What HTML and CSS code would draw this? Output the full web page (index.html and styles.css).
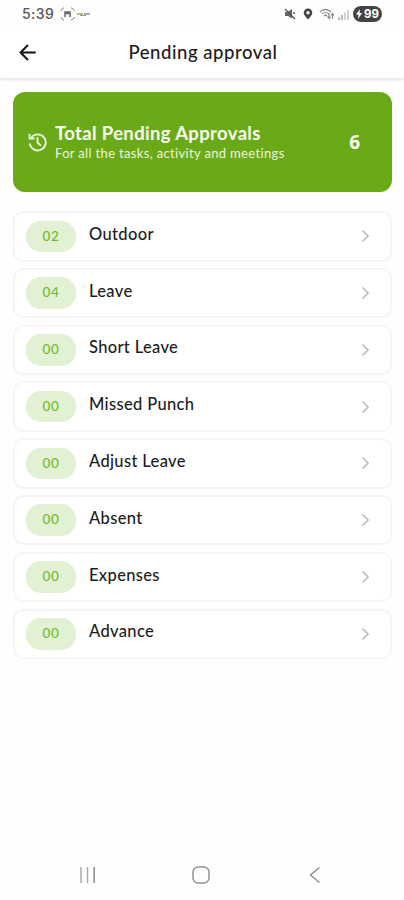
FILE: index.html
```
<!DOCTYPE html>
<html lang="en">
<head>
<meta charset="utf-8">
<title>Pending approval</title>
<link rel="stylesheet" href="styles.css">
</head>
<body>
<div class="screen">
  <div class="status">
    <span class="clock">5:39</span>
    <svg class="scan" width="15" height="14" viewBox="0 0 15 14" fill="none" stroke="#888"><path d="M1 4V3l2-2h1M11 1h1l2 2v1M14 10v1l-2 2h-1M4 13H3l-2-2v-1"/><path d="M5 10V5h5v5M5.500 6.500h4" stroke="#666" stroke-width="1.500"/></svg>
    <svg class="app" width="14" height="5" viewBox="0 0 14 5" fill="none"><path d="M0 2h6" stroke="#b5bc76" stroke-width="2"/><path d="M3 3.500h6" stroke="#999"/><path d="M7 2h6" stroke="#aaa" stroke-width="2"/></svg>
    <span class="fill"></span>
    <svg class="mute" width="12" height="12" viewBox="0 0 12 12"><path d="M1 4h2.500L8 1v9.500L4 8H1z" fill="#666"/><path d="M1 1l10 10M9 5h2" stroke="#555" stroke-width="1.300"/></svg>
    <svg class="pin" width="10" height="12" viewBox="0 0 10 12"><path fill-rule="evenodd" d="M5 .5a4.300 4.300 0 0 1 4.300 4.300C9.300 7.500 5 11.500 5 11.500S.7 7.500.7 4.800A4.300 4.300 0 0 1 5 .5zM5 3a1.700 1.700 0 1 0 0 3.400A1.700 1.700 0 0 0 5 3z" fill="#444"/></svg>
    <svg class="wifi" width="16" height="12" viewBox="0 0 16 12" fill="none" stroke="#888" stroke-width="1.200"><path d="M1 4q5.500-5 11 0M3 6q3.500-3 7 0M5 8q1.500-1.500 3 0M10 5v5M8.500 8.500L10 10.500l1.500-2M13.500 11V6M12 7.500L13.500 5.500 15 7.500"/></svg>
    <svg class="signal" width="11" height="11" viewBox="0 0 11 11" stroke-width="1.300"><path d="M1 11V8M4 11V6" stroke="#999"/><path d="M7 11V3.500M10 11V1" stroke="#bbb"/></svg>
    <span class="battery"><svg width="6" height="10" viewBox="0 0 6 10"><path d="M4 0L0 5.500h2.500L2 10l4-6H3.500z" fill="#fff"/></svg>99</span>
  </div>
  <header class="bar">
    <svg class="back" width="18" height="17" viewBox="0 0 18 17" fill="none" stroke="#111" stroke-width="1.900"><path d="M16.700 8.500H2M9 1L1.500 8.500 9 16"/></svg>
    <h1>Pending approval</h1>
  </header>
  <section class="total">
    <svg class="history" width="19" height="20" viewBox="0 0 19 20" fill="none" stroke="#eef8df" stroke-width="1.800"><path d="M3.200 5.800A8 8 0 1 1 1.800 11.500"/><path d="M1.500 1.800v4.700h5M9.500 5v5.500l3.500 3.300"/></svg>
    <div class="copy">
      <h2>Total Pending Approvals</h2>
      <p>For all the tasks, activity and meetings</p>
    </div>
    <b class="sum">6</b>
  </section>
  <ul class="list">
    <li><span class="count">02</span><span class="name">Outdoor</span><svg class="chev" viewBox="0 0 9 14"><path d="M1.500 1.500l5.500 5.500-5.500 5.500"/></svg></li>
    <li><span class="count">04</span><span class="name">Leave</span><svg class="chev" viewBox="0 0 9 14"><path d="M1.500 1.500l5.500 5.500-5.500 5.500"/></svg></li>
    <li><span class="count">00</span><span class="name">Short Leave</span><svg class="chev" viewBox="0 0 9 14"><path d="M1.500 1.500l5.500 5.500-5.500 5.500"/></svg></li>
    <li><span class="count">00</span><span class="name">Missed Punch</span><svg class="chev" viewBox="0 0 9 14"><path d="M1.500 1.500l5.500 5.500-5.500 5.500"/></svg></li>
    <li><span class="count">00</span><span class="name">Adjust Leave</span><svg class="chev" viewBox="0 0 9 14"><path d="M1.500 1.500l5.500 5.500-5.500 5.500"/></svg></li>
    <li><span class="count">00</span><span class="name">Absent</span><svg class="chev" viewBox="0 0 9 14"><path d="M1.500 1.500l5.500 5.500-5.500 5.500"/></svg></li>
    <li><span class="count">00</span><span class="name">Expenses</span><svg class="chev" viewBox="0 0 9 14"><path d="M1.500 1.500l5.500 5.500-5.500 5.500"/></svg></li>
    <li><span class="count">00</span><span class="name">Advance</span><svg class="chev" viewBox="0 0 9 14"><path d="M1.500 1.500l5.500 5.500-5.500 5.500"/></svg></li>
  </ul>
  <nav class="keys">
    <svg width="18" height="18" viewBox="0 0 18 18" fill="none" stroke-width="1.500"><path d="M2 1v16M8.500 1v16" stroke="#aaa"/><path d="M15.200 1v16" stroke="#888"/></svg>
    <svg width="20" height="20" viewBox="0 0 20 20" fill="none" stroke="#929292" stroke-width="1.500"><rect x="2" y="2" width="16" height="16" rx="5"/></svg>
    <svg width="12" height="18" viewBox="0 0 12 18" fill="none" stroke="#888" stroke-width="1.300"><path d="M10.500 1.500L1.500 9l9 7.500"/></svg>
  </nav>
</div>
</body>
</html>
```
FILE: styles.css
```
* { box-sizing: border-box; margin: 0; padding: 0; }
body { background: #fefefe; font-family: Lato, "Open Sans", sans-serif; color: #1c1c1c; }
svg { display: block; flex: none; }
.screen { width: 404px; height: 900px; display: flex; flex-direction: column; overflow: hidden; }
.status { height: 28px; display: flex; align-items: center; padding: 0 22px; flex: none; }
.clock { font: 500 14px/28px Inter, sans-serif; letter-spacing: .4px; color: #555; width: 38px; }
.app { margin-left: 2px; }
.fill { flex: 1; }
.mute { margin-right: 1px; }
.pin { margin-left: 6px; }
.wifi { margin-left: 6px; }
.signal { margin-left: 3px; }
.battery { margin-left: 4px; width: 29px; height: 16px; border-radius: 8px; background: #444; color: #fff; font: 700 11.500px/16px Inter, sans-serif; display: flex; align-items: center; justify-content: center; gap: 2px; }
.bar { height: 50px; flex: none; display: flex; align-items: center; padding: 0 0 2px 19px; background: #fff; box-shadow: 0 1px 4px rgba(0, 0, 0, .16); clip-path: inset(0 0 -6px 0); }
.bar h1 { flex: 1; padding-right: 35px; text-align: center; font-size: 18.500px; line-height: 24px; font-weight: 500; letter-spacing: .55px; }
.total { margin: 14px 12px 0 13px; height: 100px; flex: none; border-radius: 12px; background: #6aaa19; color: #f7fcef; display: flex; align-items: center; padding: 0 32px 0 15px; }
.copy { flex: 1; margin-left: 8px; white-space: nowrap; }
.copy h2 { font-size: 18.500px; line-height: 22px; font-weight: 700; letter-spacing: .35px; }
.copy p { font-size: 13px; line-height: 19px; letter-spacing: .34px; color: #eaf5da; }
.sum { font: 700 19px/24px "Open Sans", sans-serif; }
.list { list-style: none; margin: 19px 12px 0 13px; display: flex; flex-direction: column; gap: 6.300px; }
.list li { height: 50.500px; border: 2px solid #f5f5f5; border-radius: 10px; background: #fff; display: flex; align-items: center; padding: 0 20px 0 11px; }
.count { width: 50px; height: 31.500px; border-radius: 15px; background: #e2f0d3; color: #70bb2b; text-align: center; font-size: 13.500px; line-height: 31px; letter-spacing: .6px; font-weight: 500; }
.name { flex: 1; margin-left: 13px; padding-bottom: 5px; font-size: 16.500px; line-height: 20px; font-weight: 500; letter-spacing: .34px; }
.chev { width: 9px; height: 14px; fill: none; stroke: #bdbdbd; stroke-width: 1.700; }
.keys { margin-top: auto; height: 50px; flex: none; display: flex; align-items: center; justify-content: space-between; padding: 0 83px 0 79px; }
.keys svg:nth-child(2) { margin-right: 4px; }
```
